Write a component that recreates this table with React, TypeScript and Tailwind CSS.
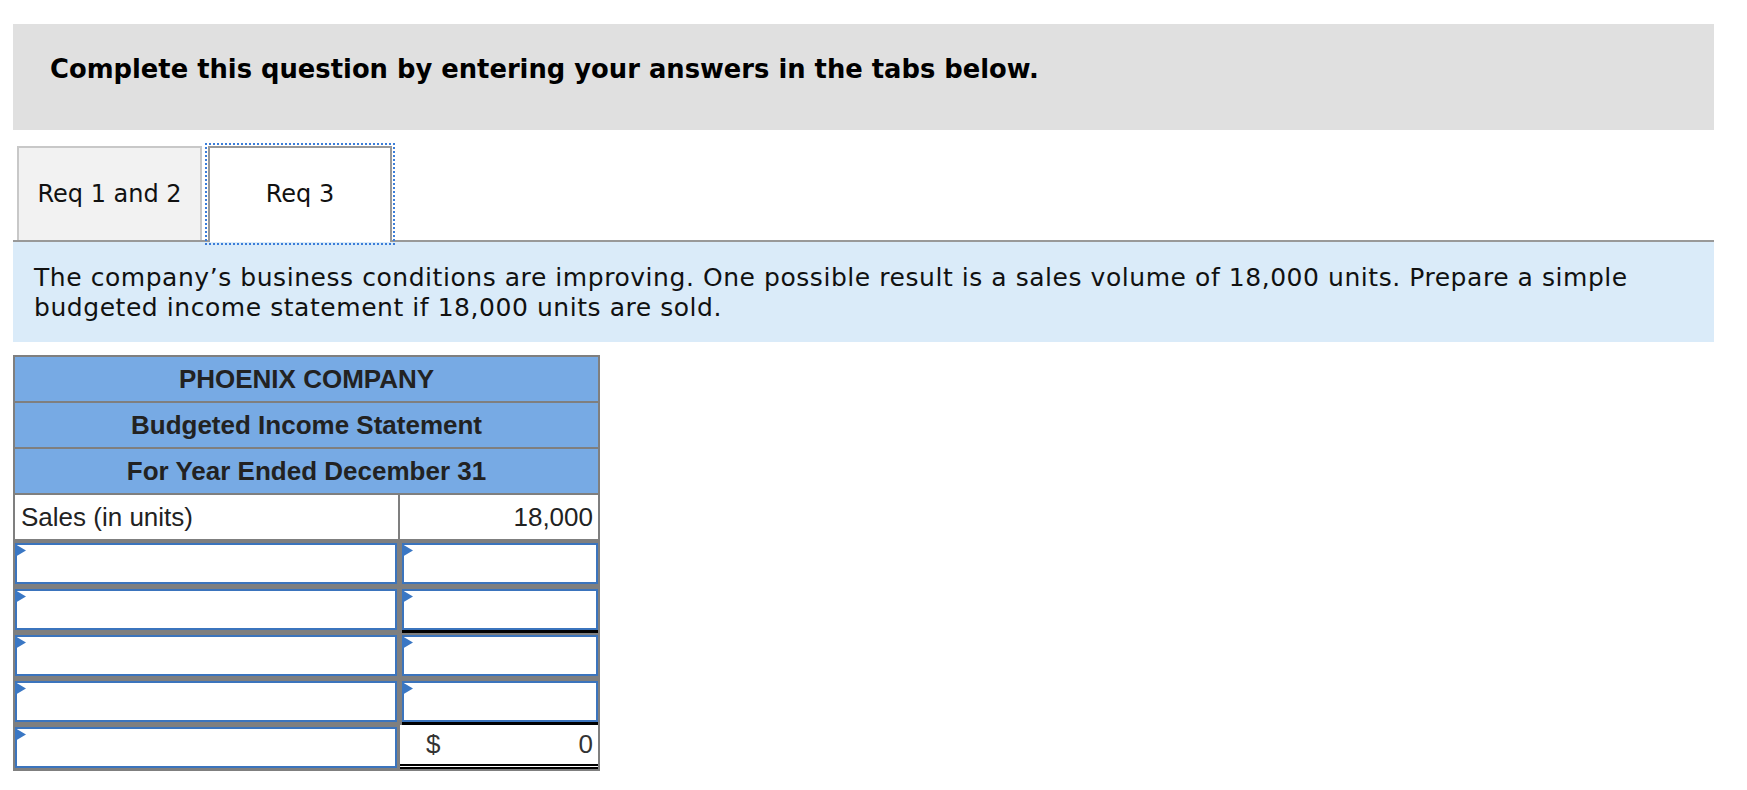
import React from "react";

const sans = { fontFamily: '"DejaVu Sans", Verdana, sans-serif' };
const arial = { fontFamily: '"Liberation Sans", Arial, sans-serif' };

// small blue marker at top-left of each input cell
function Marker() {
  return (
    <svg className="absolute -left-[2px] -top-[1px]" width="11" height="13" viewBox="0 0 11 13">
      <polygon points="0,0 11,6.5 0,13" fill="#3a77c4" />
    </svg>
  );
}

function InputCell({ className = "" }: { className?: string }) {
  return (
    <div className={"relative h-[41px] border-2 border-[#3b74bd] bg-white " + className}>
      <Marker />
    </div>
  );
}

export default function App() {
  // rows after "Sales (in units)": underline = black line under the right column
  const rows = [
    { underline: false },
    { underline: true },
    { underline: false },
    { underline: true },
  ];

  return (
    <div className="w-[1747px] min-h-[790px] bg-white pt-[24px]" style={sans}>
      <div className="ml-[13px] w-[1701px]">
        {/* banner */}
        <div className="h-[106px] bg-[#e0e0e0] pl-[37px] pt-[30px]">
          <p className="text-[25.8px] leading-[31px] font-bold text-black">
            Complete this question by entering your answers in the tabs below.
          </p>
        </div>

        {/* tabs */}
        <div className="mt-[13px] flex h-[99px] items-end border-b-2 border-[#999999] pl-[4px]">
          <div className="flex h-[94px] w-[185px] items-center justify-center border-2 border-b-0 border-[#c8c8c8] bg-[#f2f2f2] text-[24px] text-[#111]">
            Req 1 and 2
          </div>
          <div className="relative z-10 -mb-[2px] ml-[6px] flex h-[96px] w-[184px] items-center justify-center border-2 border-b-0 border-[#999999] bg-white pb-[2px] text-[24px] text-[#111] outline-2 outline-offset-1 outline-dotted outline-[#3b7dd8]">
            Req 3
          </div>
        </div>

        {/* question text */}
        <div className="h-[100px] bg-[#daebf9] pl-[21px] pt-[21px] text-[25px] leading-[30px] tracking-[0.55px] text-[#111]">
          The company’s business conditions are improving. One possible result is a sales volume of 18,000 units. Prepare a simple
          <br />
          budgeted income statement if 18,000 units are sold.
        </div>

        {/* income statement */}
        <div className="mt-[13px] w-[587px] border-2 border-[#7f7f7f] text-[26px] text-[#222]" style={arial}>
          <div className="flex h-[46px] items-center justify-center border-b-2 border-[#7f7f7f] bg-[#77aae4] font-bold">
            PHOENIX COMPANY
          </div>
          <div className="flex h-[46px] items-center justify-center border-b-2 border-[#7f7f7f] bg-[#77aae4] font-bold">
            Budgeted Income Statement
          </div>
          <div className="flex h-[46px] items-center justify-center border-b-2 border-[#7f7f7f] bg-[#77aae4] font-bold">
            For Year Ended December 31
          </div>
          <div className="flex h-[46px] border-b-2 border-[#7f7f7f]">
            <div className="flex w-[385px] items-center border-r-2 border-[#7f7f7f] pl-[6px]">Sales (in units)</div>
            <div className="flex flex-1 items-center justify-end pr-[5px]">18,000</div>
          </div>

          {rows.map((r, i) => (
            <div key={i} className="flex h-[46px] gap-[5px] bg-[#7f7f7f] pt-[2px]">
              <div className="w-[382px]">
                <InputCell />
              </div>
              <div className={"flex-1 " + (r.underline ? "border-b-[3px] border-black" : "")}>
                <InputCell />
              </div>
            </div>
          ))}

          <div className="flex h-[44px] gap-[3px] bg-[#7f7f7f] pt-[2px]">
            <div className="w-[382px]">
              <InputCell />
            </div>
            <div className="-mt-[2px] flex flex-1 items-center justify-between border-b-[5px] border-double border-black bg-white pl-[26px] pr-[5px] text-[#333]">
              <span>$</span>
              <span>0</span>
            </div>
          </div>
        </div>
      </div>
    </div>
  );
}
